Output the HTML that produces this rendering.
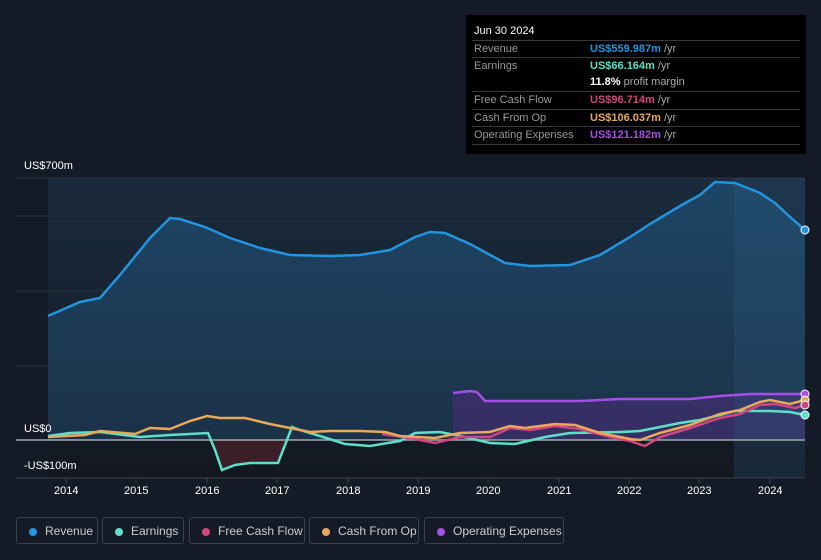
<!DOCTYPE html>
<html><head><meta charset="utf-8"><style>
body{margin:0;width:821px;height:560px;background:#151b26;font-family:"Liberation Sans",sans-serif;overflow:hidden;position:relative}
.tt{position:absolute;left:466px;top:15px;width:340px;height:139px;background:#000;color:#999;font-size:11px}
.tt .d{color:#fff;font-size:11px;position:absolute;left:8px;top:10px}
.row{position:absolute;left:6px;width:328px;border-top:1px solid #3a3a3a;height:17px;line-height:17px}
.row span.l{position:absolute;left:2px}
.row span.v{position:absolute;left:118px;font-weight:bold}
.row span.v i{font-style:normal;font-weight:normal;color:#aaa}
.lg{position:absolute;top:517px;height:27px;border:1px solid #3a414d;border-radius:3px;color:#ccc;font-size:12px;line-height:27px;box-sizing:border-box;padding-left:28px}
.lg b{position:absolute;left:12px;top:10px;width:8px;height:8px;border-radius:50%}
.ax{position:absolute;color:#fff;font-size:11px}
</style></head><body>
<svg width="821" height="560" style="position:absolute;left:0;top:0">
<defs>
<linearGradient id="bg" x1="0" y1="0" x2="0" y2="1"><stop offset="0" stop-color="#1a2b3d"/><stop offset="1" stop-color="#131821"/></linearGradient>
<linearGradient id="rv" x1="0" y1="0" x2="0" y2="1"><stop offset="0" stop-color="#1e4566"/><stop offset="1" stop-color="#1b3248"/></linearGradient>
</defs>
<rect x="48" y="178" width="757" height="300" fill="url(#bg)"/>
<line x1="16" y1="178" x2="805" y2="178" stroke="#2e3644"/>
<line x1="16" y1="216" x2="805" y2="216" stroke="#2a3240"/>
<line x1="16" y1="291" x2="805" y2="291" stroke="#2a3240"/>
<line x1="16" y1="366" x2="805" y2="366" stroke="#2a3240"/>
<path d="M48,316 L80,302 L100,298 L120,275 L150,238 L170,218 L180,219 L205,227 L230,238 L260,248 L290,255 L330,256 L360,255 L390,250 L415,237 L430,232 L445,233 L470,244 L505,263 L530,266 L570,265 L600,255 L630,237 L650,224 L680,206 L700,195 L715,182 L735,183 L760,193 L775,203 L790,217 L805,230 L805,440 L48,440Z" fill="url(#rv)"/>
<path d="M453,393 L470,391 L477,392 L485,401 L530,401 L580,401 L620,399 L690,399 L720,396 L750,394 L805,394 L805,440 L453,440Z" fill="#3b2f6b" opacity="0.85"/>
<path d="M208,440 L215,450 L222,470 L235,465 L250,463 L278,463 L290,440Z" fill="#3a1f28"/>
<rect x="734" y="178" width="71" height="300" fill="#2a5a80" opacity="0.25"/>
<line x1="16" y1="440" x2="805" y2="440" stroke="#9aa" stroke-width="1.5"/>
<line x1="16" y1="478" x2="805" y2="478" stroke="#3a414d"/>
<path d="M48,316 L80,302 L100,298 L120,275 L150,238 L170,218 L180,219 L205,227 L230,238 L260,248 L290,255 L330,256 L360,255 L390,250 L415,237 L430,232 L445,233 L470,244 L505,263 L530,266 L570,265 L600,255 L630,237 L650,224 L680,206 L700,195 L715,182 L735,183 L760,193 L775,203 L790,217 L805,230" fill="none" stroke="#2394df" stroke-width="2.5"/>
<path d="M453,393 L470,391 L477,392 L485,401 L530,401 L580,401 L620,399 L690,399 L720,396 L750,394 L805,394" fill="none" stroke="#a64ee8" stroke-width="2.5"/>
<path d="M48,436 L70,433 L100,432 L140,437 L170,435 L208,433 L215,450 L222,470 L235,465 L250,463 L278,463 L292,427 L300,430 L320,436 L345,444 L370,446 L400,441 L415,433 L440,432 L460,436 L490,443 L515,444 L545,437 L570,433 L620,432 L640,431 L680,423 L700,420 L720,415 L735,411 L770,411 L790,412 L805,415" fill="none" stroke="#5de0c8" stroke-width="2.5"/>
<path d="M382,434 L410,438 L435,443 L460,437 L490,437 L510,428 L530,430 L555,426 L580,429 L610,437 L630,441 L645,446 L660,437 L690,428 L720,418 L740,414 L760,405 L775,404 L795,408 L805,405" fill="none" stroke="#d2467f" stroke-width="2.5"/>
<path d="M48,437 L85,435 L100,431 L135,434 L150,428 L170,429 L190,421 L207,416 L220,418 L245,418 L270,424 L310,432 L330,431 L360,431 L385,432 L400,436 L435,438 L460,433 L490,432 L510,426 L525,428 L555,424 L575,425 L600,433 L630,439 L640,440 L660,433 L690,425 L720,414 L740,410 L760,402 L770,400 L790,404 L805,400" fill="none" stroke="#e9a95a" stroke-width="2.5"/>
<circle cx="805" cy="230" r="4" fill="#2394df" stroke="#fff"/>
<circle cx="805" cy="394" r="4" fill="#a64ee8" stroke="#fff"/>
<circle cx="805" cy="400" r="4" fill="#e9a95a" stroke="#fff"/>
<circle cx="805" cy="405" r="4" fill="#d2467f" stroke="#fff"/>
<circle cx="805" cy="415" r="4" fill="#5de0c8" stroke="#fff"/>
<g stroke="#3a414d"><line x1="66" y1="478" x2="66" y2="483"/><line x1="136" y1="478" x2="136" y2="483"/><line x1="207" y1="478" x2="207" y2="483"/><line x1="277" y1="478" x2="277" y2="483"/><line x1="348" y1="478" x2="348" y2="483"/><line x1="418" y1="478" x2="418" y2="483"/><line x1="488" y1="478" x2="488" y2="483"/><line x1="559" y1="478" x2="559" y2="483"/><line x1="629" y1="478" x2="629" y2="483"/><line x1="699" y1="478" x2="699" y2="483"/><line x1="770" y1="478" x2="770" y2="483"/></g>
</svg>
<div class="ax" style="left:24px;top:160px">US$700m</div>
<div class="ax" style="left:24px;top:423px">US$0</div>
<div class="ax" style="left:24px;top:460px">-US$100m</div>
<div class="ax" style="left:54px;top:485px">2014</div>
<div class="ax" style="left:124px;top:485px">2015</div>
<div class="ax" style="left:195px;top:485px">2016</div>
<div class="ax" style="left:265px;top:485px">2017</div>
<div class="ax" style="left:336px;top:485px">2018</div>
<div class="ax" style="left:406px;top:485px">2019</div>
<div class="ax" style="left:476px;top:485px">2020</div>
<div class="ax" style="left:547px;top:485px">2021</div>
<div class="ax" style="left:617px;top:485px">2022</div>
<div class="ax" style="left:687px;top:485px">2023</div>
<div class="ax" style="left:758px;top:485px">2024</div>
<div class="tt">
<div class="d">Jun 30 2024</div>
<div class="row" style="top:25px"><span class="l">Revenue</span><span class="v" style="color:#2394df">US$559.987m <i>/yr</i></span></div>
<div class="row" style="top:42px"><span class="l">Earnings</span><span class="v" style="color:#5de0c8">US$66.164m <i>/yr</i></span></div>
<div class="row" style="top:59px;border-top:none"><span class="v" style="color:#fff">11.8% <i>profit margin</i></span></div>
<div class="row" style="top:76px"><span class="l">Free Cash Flow</span><span class="v" style="color:#d2467f">US$96.714m <i>/yr</i></span></div>
<div class="row" style="top:94px"><span class="l">Cash From Op</span><span class="v" style="color:#e9a95a">US$106.037m <i>/yr</i></span></div>
<div class="row" style="top:111px"><span class="l">Operating Expenses</span><span class="v" style="color:#a64ee8">US$121.182m <i>/yr</i></span></div>
<div class="row" style="top:129px;height:0"></div>
</div>
<div class="lg" style="left:16px;width:82px"><b style="background:#2394df"></b>Revenue</div>
<div class="lg" style="left:102px;width:82px"><b style="background:#5de0c8"></b>Earnings</div>
<div class="lg" style="left:189px;width:116px"><b style="background:#d2467f"></b>Free Cash Flow</div>
<div class="lg" style="left:309px;width:110px"><b style="background:#e9a95a"></b>Cash From Op</div>
<div class="lg" style="left:424px;width:140px"><b style="background:#a64ee8"></b>Operating Expenses</div>
</body></html>
